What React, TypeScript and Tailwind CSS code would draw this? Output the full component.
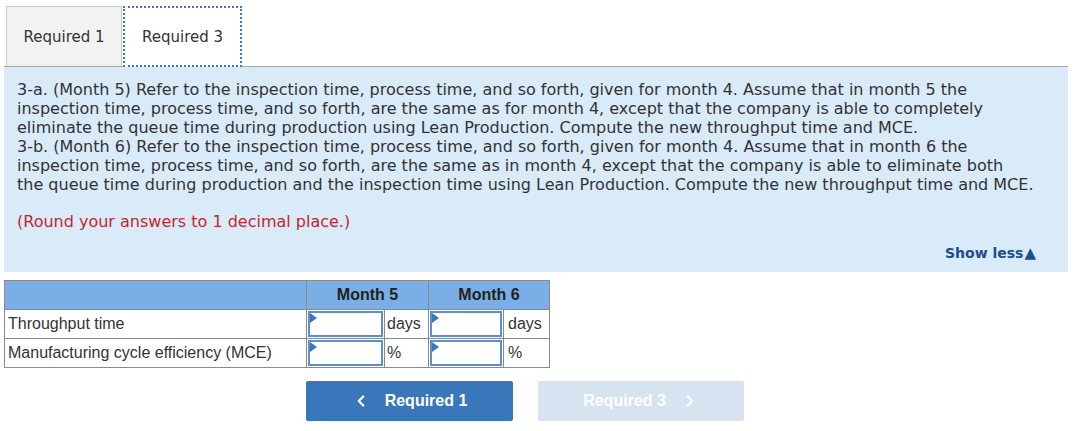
import { ChevronLeft, ChevronRight } from "lucide-react";

const lines = [
  "3-a. (Month 5) Refer to the inspection time, process time, and so forth, given for month 4. Assume that in month 5 the",
  "inspection time, process time, and so forth, are the same as for month 4, except that the company is able to completely",
  "eliminate the queue time during production using Lean Production. Compute the new throughput time and MCE.",
  "3-b. (Month 6) Refer to the inspection time, process time, and so forth, given for month 4. Assume that in month 6 the",
  "inspection time, process time, and so forth, are the same as in month 4, except that the company is able to eliminate both",
  "the queue time during production and the inspection time using Lean Production. Compute the new throughput time and MCE.",
];

function AnswerInput() {
  return (
    <div className="relative h-[26px] w-full border-2 border-[#5a8fd0] bg-white">
      <span className="absolute left-0 top-0 h-0 w-0 border-y-[5px] border-l-[7px] border-y-transparent border-l-[#3a77bb]" />
    </div>
  );
}

export default function App() {
  return (
    <div className="w-[1077px] bg-white pt-[6px] font-['DejaVu_Sans',sans-serif]">
      {/* tabs */}
      <div className="ml-[6px] flex items-end text-[15px] text-[#333]">
        <div className="flex h-[60px] w-[116px] items-center justify-center border border-b-0 border-[#c8c8c8] bg-[#f2f2f2] pt-[2px]">
          Required 1
        </div>
        <div className="-mb-px ml-[1px] flex h-[61px] w-[119px] items-center justify-center border-2 border-dotted border-[#3a77bb] bg-white pt-[2px]">
          Required 3
        </div>
      </div>

      {/* question panel */}
      <div className="mx-[4px] w-[1064px] border-t border-[#a6a6a6] bg-[#d9eaf8] px-[13px] pb-[9px] pt-[13px] text-[16px] leading-[19px] text-[#333]">
        {lines.map((l) => (
          <div key={l} className="whitespace-nowrap">
            {l}
          </div>
        ))}
        <div className="mt-[18px] text-[#c0282d]">(Round your answers to 1 decimal place.)</div>
        <div className="mt-[13px] flex items-center justify-end pr-[19px] text-[14px] font-bold text-[#1c4d8c]">
          Show less<span className="ml-[1px] text-[15px] leading-[17px]">▲</span>
        </div>
      </div>

      {/* answer table */}
      <table className="ml-[4px] mt-[8px] border-collapse font-['Liberation_Sans',Arial,sans-serif] text-[16px] text-[#333]">
        <thead>
          <tr className="h-[29px] bg-[#7aaee4]">
            <th className="w-[302px] border border-[#8a8a8a]" />
            <th colSpan={2} className="w-[122px] border border-[#8a8a8a] font-bold text-[#222]">
              Month 5
            </th>
            <th colSpan={2} className="w-[121px] border border-[#8a8a8a] font-bold text-[#222]">
              Month 6
            </th>
          </tr>
        </thead>
        <tbody>
          {[
            ["Throughput time", "days"],
            ["Manufacturing cycle efficiency (MCE)", "%"],
          ].map(([label, unit]) => (
            <tr key={label} className="h-[29px]">
              <td className="border border-[#8a8a8a] px-[3px] text-left">{label}</td>
              <td className="w-[78px] border border-[#8a8a8a] p-[1px]">
                <AnswerInput />
              </td>
              <td className="w-[44px] border border-[#8a8a8a] px-[2px] text-left">{unit}</td>
              <td className="w-[75px] border border-[#8a8a8a] p-[1px]">
                <AnswerInput />
              </td>
              <td className="w-[46px] border border-[#8a8a8a] px-[4px] text-left">{unit}</td>
            </tr>
          ))}
        </tbody>
      </table>

      {/* nav buttons */}
      <div className="ml-[306px] mt-[13px] flex gap-[25px] pb-[10px] font-['Liberation_Sans',Arial,sans-serif] text-[16px] font-bold text-white">
        <button className="flex h-[40px] w-[207px] items-center justify-center gap-[15px] rounded-[2px] bg-[#3a76ba]">
          <ChevronLeft size={18} strokeWidth={3} />
          <span>Required 1</span>
        </button>
        <button className="flex h-[40px] w-[206px] items-center justify-center gap-[15px] rounded-[2px] bg-[#d8e3f1]">
          <span>Required 3</span>
          <ChevronRight size={18} strokeWidth={3} />
        </button>
      </div>
    </div>
  );
}
